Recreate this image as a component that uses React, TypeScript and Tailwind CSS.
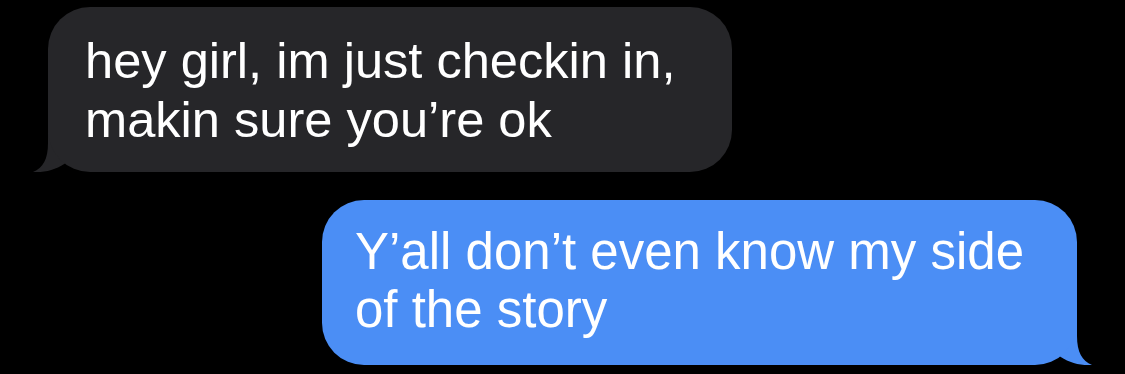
import React from "react";

function Tail({ color, side }: { color: string; side: "left" | "right" }) {
  if (side === "left") {
    return (
      <svg
        className="absolute bottom-0 left-[-15px]"
        width="50"
        height="45"
        viewBox="0 0 50 45"
        aria-hidden
      >
        <path
          d="M15 0 L15 16 C15 32 10 41 0 45 C12 46 25 42 34 35 L50 20 L50 0 Z"
          fill={color}
        />
      </svg>
    );
  }
  return (
    <svg
      className="absolute bottom-0 right-[-15px]"
      width="50"
      height="45"
      viewBox="0 0 50 45"
      aria-hidden
    >
      <path
        d="M35 0 L35 16 C35 32 40 41 50 45 C38 46 25 42 16 35 L0 20 L0 0 Z"
        fill={color}
      />
    </svg>
  );
}

export default function App() {
  return (
    <div
      className="w-[1125px] h-[374px] bg-black flex flex-col overflow-hidden antialiased"
      style={{ fontFamily: '"Liberation Sans", Arial, sans-serif' }}
    >
      <div className="relative mt-[7px] ml-[48px] w-[684px] h-[165px]">
        <div className="relative z-10 h-full rounded-[42px] bg-[#262629] pl-[37px] pt-[24px] text-white text-[50.6px] leading-[59px]">
          hey girl, im just checkin in,
          <br />
          makin sure you’re ok
        </div>
        <Tail color="#262629" side="left" />
      </div>

      <div className="relative mt-[28px] ml-auto mr-[48px] w-[755px] h-[165px]">
        <div className="relative z-10 h-full rounded-[42px] bg-[#4b8ef5] pl-[33px] pt-[23px] text-white text-[51px] leading-[58px]">
          Y’all don’t even know my side
          <br />
          of the story
        </div>
        <Tail color="#4b8ef5" side="right" />
      </div>
    </div>
  );
}
